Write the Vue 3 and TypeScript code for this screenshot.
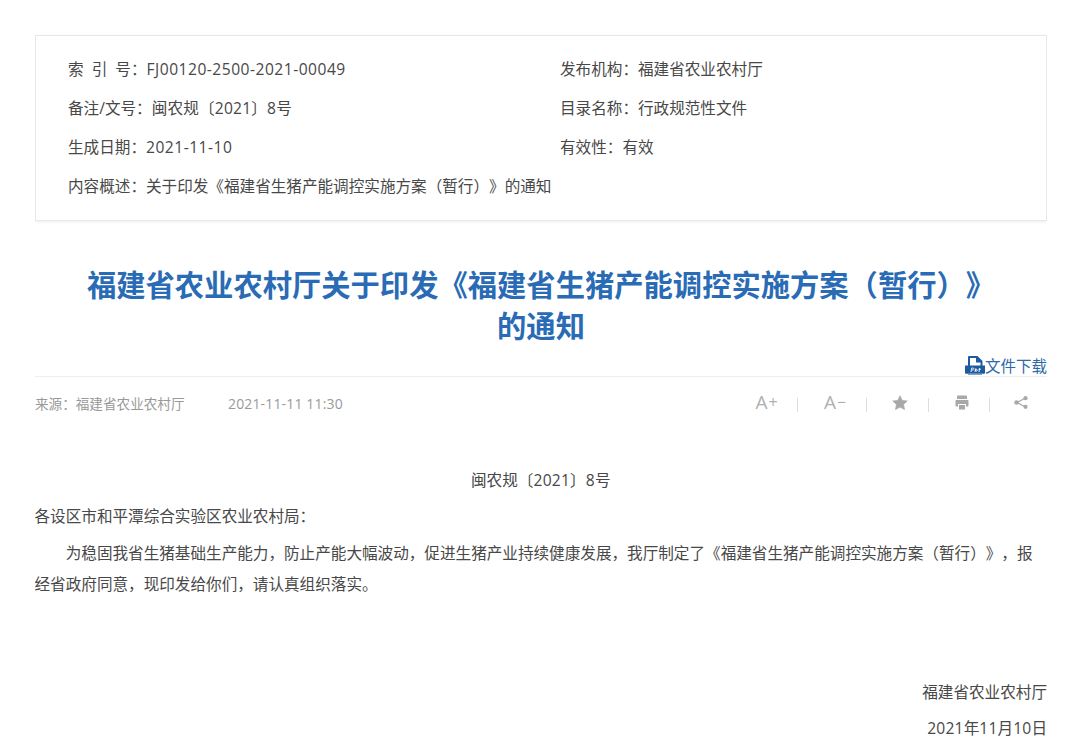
<script setup lang="ts">
const left = [
  ['索 引 号：', 'FJ00120-2500-2021-00049', 'num'],
  ['备注/文号：', '闽农规〔2021〕8号', 'num-tight'],
  ['生成日期：', '2021-11-10', 'num'],
];
const right = [
  ['发布机构：', '福建省农业农村厅'],
  ['目录名称：', '行政规范性文件'],
  ['有效性：', '有效'],
];
</script>

<template>
  <div class="page">
    <section class="info">
      <div class="info-grid">
        <template v-for="(row, i) in left" :key="i">
          <div class="cell"><span class="label">{{ row[0] }}</span><span :class="row[2]">{{ row[1] }}</span></div>
          <div class="cell">{{ right[i][0] }}{{ right[i][1] }}</div>
        </template>
        <div class="cell wide">内容概述：关于印发《福建省生猪产能调控实施方案（暂行）》的通知</div>
      </div>
    </section>

    <h1 class="title">福建省农业农村厅关于印发《福建省生猪产能调控实施方案（暂行）》<br />的通知</h1>

    <div class="download">
      <svg class="pdf" width="20" height="21" viewBox="0 0 20 21">
        <path d="M3 11V2.200C3 1.500 3.500 1 4.200 1H12.500L17.500 6v5h-2V7.500h-4.500V3H5v8z" fill="#1d5a9e" />
        <path d="M0 10.500h20v7c0 .8-.5 1.300-1.200 1.300H1.200C.5 18.800 0 18.300 0 17.500z" fill="#1d5a9e" />
        <path d="M3 18.800h14V20H3z" fill="#7fa3c9" />
        <path d="M6 17l.7-4h1.600c.8 0 .8 2-.5 2H7M10 17l.6-3.500M10.600 15.200c0-1.200 1.700-1.200 1.700 0s-1.700 1.200-1.700 0M14 17l.7-4M13.500 14.300h2.200" stroke="#fff" stroke-width=".9" fill="none" />
      </svg>
      <span>文件下载</span>
    </div>

    <div class="meta">
      <div class="meta-left">
        <span class="source">来源：福建省农业农村厅</span>
        <span class="time">2021-11-11 11:30</span>
      </div>
      <div class="tools">
        <span class="tool t1">A<b>+</b></span><i class="sep s1"></i>
        <span class="tool t2">A<b>−</b></span><i class="sep s2"></i>
        <span class="tool t3">
          <svg width="16" height="15" viewBox="0 0 18 17"><path d="M9 .8l2.500 5.300 5.700.7-4.200 4 1.100 5.700L9 13.700l-5.100 2.800 1.100-5.700-4.200-4 5.700-.7z" fill="#a8a8a8" stroke="#a8a8a8" stroke-width=".8" stroke-linejoin="round" /></svg>
        </span><i class="sep s3"></i>
        <span class="tool t4">
          <svg width="14" height="15" viewBox="0 0 14 15"><path d="M3 .5h8c.5 0 1 .5 1 1V4H2V1.500c0-.5.5-1 1-1zM1.500 5h11c.6 0 1 .4 1 1v4.500c0 .6-.4 1-1 1H11V9H3v2.500H1.500c-.6 0-1-.4-1-1V6c0-.6.4-1 1-1zM4 10h6v4.500H4z" fill="#a8a8a8" /></svg>
        </span><i class="sep s4"></i>
        <span class="tool t5">
          <svg width="14" height="13" viewBox="0 0 14 13"><path d="M3 6.500l8-4.300M3 6.500l8 4.300" stroke="#a8a8a8" stroke-width="1.300" fill="none" /><circle cx="2.500" cy="6.500" r="2.200" fill="#a8a8a8" /><circle cx="11.500" cy="2.200" r="2.100" fill="#a8a8a8" /><circle cx="11.500" cy="10.800" r="2.100" fill="#a8a8a8" /></svg>
        </span>
      </div>
    </div>

    <article class="body">
      <p class="center">闽农规<span class="num-tight">〔2021〕8</span>号</p>
      <p class="salute">各设区市和平潭综合实验区农业农村局：</p>
      <p class="para">为稳固我省生猪基础生产能力，防止产能大幅波动，促进生猪产业持续健康发展，我厅制定了《福建省生猪产能调控实施方案（暂行）》，报经省政府同意，现印发给你们，请认真组织落实。</p>
      <p class="sign">福建省农业农村厅</p>
      <p class="date"><span class="num-tight">2021</span>年<span class="num-tight">11</span>月<span class="num-tight">10</span>日</p>
    </article>
  </div>
</template>

<style scoped>
.page {
  width: 1012px;
  height: 746px;
  margin-left: 35px;
  padding-top: 35px;
  box-sizing: border-box;
  overflow: hidden;
  font-family: "Open Sans", "Noto Sans CJK SC", sans-serif;
  font-size: 15.600px;
  color: #484848;
  text-spacing-trim: space-all;
}
.info {
  height: 186px;
  box-sizing: border-box;
  border: 1px solid #e8e8e8;
  box-shadow: 0 1px 3px rgba(0, 0, 0, 0.07);
  padding: 13px 32px 0;
}
.info-grid {
  display: grid;
  grid-template-columns: 492px 1fr;
  grid-auto-rows: 39px;
  align-items: center;
}
.label { word-spacing: 4px; }
.num { letter-spacing: 0.5px; }
.num-tight { letter-spacing: 0.2px; }
.wide { grid-column: 1 / 3; }
.title {
  margin: 44px 0 0;
  text-align: center;
  color: #2a6bb5;
  font-size: 29.300px;
  line-height: 41px;
  font-weight: 700;
  height: 82px;
}
.download {
  display: flex;
  justify-content: flex-end;
  align-items: center;
  margin-top: 7px;
  height: 22px;
  color: #2f6aa8;
  font-size: 15.500px;
}
.pdf { display: block; }
.meta {
  display: flex;
  justify-content: space-between;
  height: 55px;
  border-top: 1px solid #eee;
}
.meta-left { padding-top: 16px; color: #999; display: flex; align-items: center; height: 20px; }
.source { font-size: 13.600px; width: 193px; }
.time { font-size: 14px; letter-spacing: 0.15px; }
.tools {
  display: flex;
  align-items: center;
  height: 20px;
  padding: 15px 19px 0 0;
  color: #b0b0b0;
}
.tool { display: flex; justify-content: center; align-items: center; font-size: 19px; line-height: 20px; }
.tool b { font-size: 16px; font-weight: 400; line-height: 1; margin-left: 1px; }
.sep { display: block; width: 1px; height: 14px; background: #ddd; margin-top: 6px; }
.t1 { width: 23px; }
.s1 { margin-left: 19px; }
.t2 { width: 22px; margin-left: 26px; }
.s2 { margin-left: 20px; }
.t3 { width: 16px; margin-left: 25px; }
.s3 { margin-left: 20px; }
.t4 { width: 14px; margin-left: 26px; }
.s4 { margin-left: 20px; }
.t5 { width: 14px; margin-left: 24px; }
.body p { margin: 0; }
.body { line-height: 31px; margin-left: -0.500px; }
.center { text-align: center; margin-top: 33px !important; }
.salute { margin-top: 5px !important; }
.para { text-indent: 2em; margin-top: 6px !important; }
.sign { text-align: right; margin-top: 77px !important; }
.date { text-align: right; margin-top: 5px !important; }
</style>
